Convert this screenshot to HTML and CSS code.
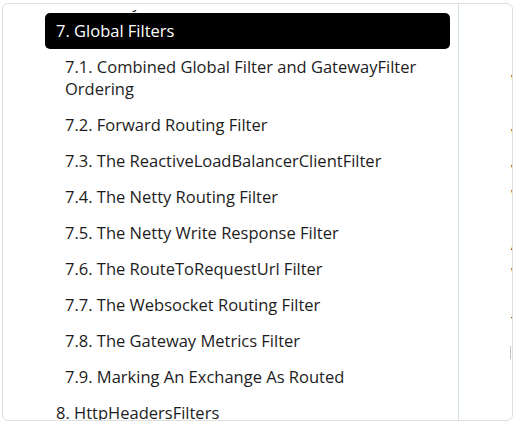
FILE: index.html
```html
<!DOCTYPE html>
<html lang="en">
<head>
<meta charset="utf-8">
<title>Table of contents</title>
<link rel="stylesheet" href="styles.css">
</head>
<body>
<div class="card">
  <nav class="sidebar">
    <div class="scroll">
      <ul class="toc">
        <li class="item partial"><a class="link">6. GatewayFilter Factories</a></li>
        <li class="item"><a class="link active">7. Global Filters</a>
          <ul class="sub">
            <li><a class="link">7.1. Combined Global Filter and GatewayFilter Ordering</a></li>
            <li><a class="link">7.2. Forward Routing Filter</a></li>
            <li><a class="link">7.3. The ReactiveLoadBalancerClientFilter</a></li>
            <li><a class="link">7.4. The Netty Routing Filter</a></li>
            <li><a class="link">7.5. The Netty Write Response Filter</a></li>
            <li><a class="link">7.6. The RouteToRequestUrl Filter</a></li>
            <li><a class="link">7.7. The Websocket Routing Filter</a></li>
            <li><a class="link">7.8. The Gateway Metrics Filter</a></li>
            <li><a class="link">7.9. Marking An Exchange As Routed</a></li>
          </ul>
        </li>
        <li class="item"><a class="link">8. HttpHeadersFilters</a></li>
      </ul>
    </div>
  </nav>
  <main class="content">
    <p class="ln l1">Web filters apply</p>
    <p class="ln l2">When a request</p>
    <p class="ln l3">which is</p>
    <p class="ln l4">Web handler</p>
    <p class="ln l5">As Gateway</p>
    <p class="ln l6">When it</p>
    <p class="ln l7">The order</p>
    <div class="bar"></div>
  </main>
</div>
</body>
</html>
```
FILE: styles.css
```css
* { box-sizing: border-box; }
html, body { margin: 0; padding: 0; background: #fff; }
body {
  padding: 3px 3px 3px 2px;
  font-family: "Open Sans", "Liberation Sans", sans-serif;
  font-size: 16.5px;
  color: #1d1d1d;
}
.card {
  width: 511px;
  height: 418px;
  border: 1px solid #dedede;
  border-radius: 6px;
  overflow: hidden;
  display: flex;
  background: #fff;
}
.sidebar {
  width: 456px;
  flex: none;
  border-right: 1px solid #d2e3e3;
  padding: 6px 8px 0 42px;
  display: flex;
  flex-direction: column;
}
.scroll {
  flex: 1;
  overflow: hidden;
}
.toc, .sub {
  list-style: none;
  margin: 0;
  padding: 0;
}
.toc { margin-top: -26px; }
.link {
  display: block;
  padding: 7px 11px;
  line-height: 22px;
  color: #1d1d1d;
  border-radius: 5px;
}
.partial .link { padding-bottom: 0; }
.link.active {
  background: #000;
  color: #fff;
}
.sub .link { padding-left: 20px; padding-right: 20px; }
.content {
  flex: 1;
  overflow: hidden;
  padding-left: 52px;
  white-space: nowrap;
  color: #222;
  font-size: 16px;
}
.ln { margin: 0; line-height: 22px; }
.l1 { margin-top: 66px; }
.l2 { margin-top: 32px; }
.l3 { margin-top: 11px; }
.l4 { margin-top: 6px; }
.l5 { margin-top: 26px; }
.l6 { margin-top: 8px; }
.l7 { margin-top: 27px; }
.bar {
  margin-top: 12px;
  margin-left: -1px;
  width: 1px;
  height: 13px;
  background: #c4c4c4;
}
```
